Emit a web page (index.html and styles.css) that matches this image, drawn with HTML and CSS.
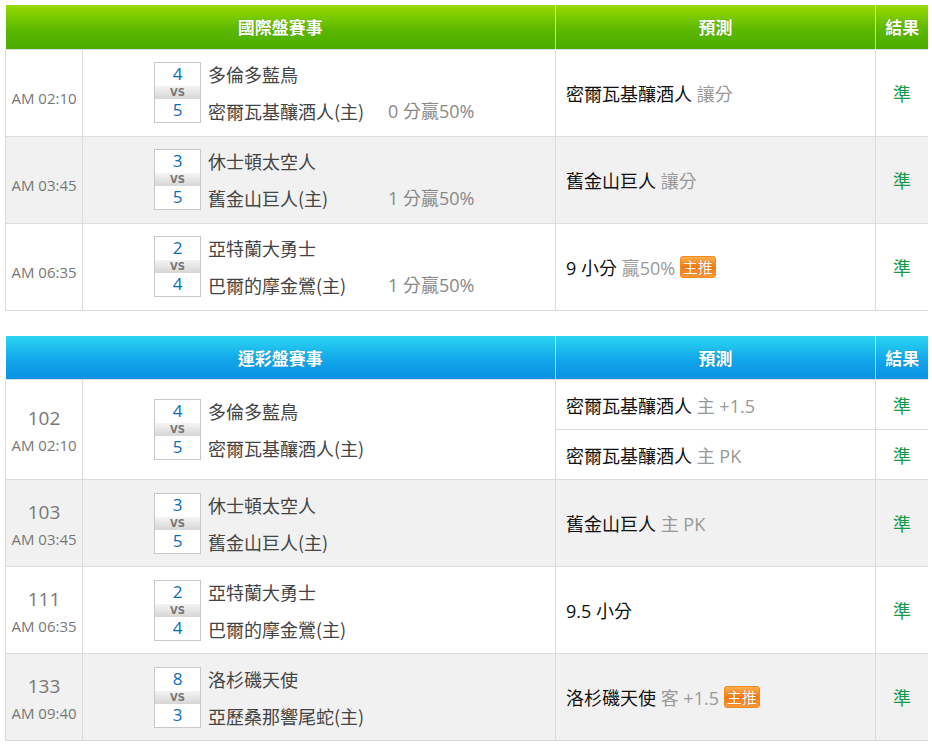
FILE: index.html
```html
<!DOCTYPE html>
<html lang="zh-Hant">
<head>
<meta charset="utf-8">
<link rel="stylesheet" href="styles.css">
</head>
<body>
<table class="board green">
  <colgroup><col class="c-time"><col class="c-match"><col class="c-pred"><col class="c-res"></colgroup>
  <thead>
    <tr><th colspan="2">國際盤賽事</th><th>預測</th><th>結果</th></tr>
  </thead>
  <tbody>
    <tr>
      <td class="time"><div class="clock low">AM 02:10</div></td>
      <td class="match">
        <div class="game">
          <div class="score s1">4</div><div class="vs">VS</div><div class="score s2">5</div>
          <div class="team t1">多倫多藍鳥</div><div class="team t2">密爾瓦基釀酒人(主)</div>
          <div class="hcp">0 分贏50%</div>
        </div>
      </td>
      <td class="pred">密爾瓦基釀酒人 <span class="sub">讓分</span></td>
      <td class="res">準</td>
    </tr>
    <tr class="alt">
      <td class="time"><div class="clock low">AM 03:45</div></td>
      <td class="match">
        <div class="game">
          <div class="score s1">3</div><div class="vs">VS</div><div class="score s2">5</div>
          <div class="team t1">休士頓太空人</div><div class="team t2">舊金山巨人(主)</div>
          <div class="hcp">1 分贏50%</div>
        </div>
      </td>
      <td class="pred">舊金山巨人 <span class="sub">讓分</span></td>
      <td class="res">準</td>
    </tr>
    <tr>
      <td class="time"><div class="clock low">AM 06:35</div></td>
      <td class="match">
        <div class="game">
          <div class="score s1">2</div><div class="vs">VS</div><div class="score s2">4</div>
          <div class="team t1">亞特蘭大勇士</div><div class="team t2">巴爾的摩金鶯(主)</div>
          <div class="hcp">1 分贏50%</div>
        </div>
      </td>
      <td class="pred">9 小分 <span class="sub">贏50%</span> <span class="badge">主推</span></td>
      <td class="res">準</td>
    </tr>
  </tbody>
</table>

<table class="board blue">
  <colgroup><col class="c-time"><col class="c-match"><col class="c-pred"><col class="c-res"></colgroup>
  <thead>
    <tr><th colspan="2">運彩盤賽事</th><th>預測</th><th>結果</th></tr>
  </thead>
  <tbody>
    <tr class="split">
      <td class="time" rowspan="2"><div class="num">102</div><div class="clock">AM 02:10</div></td>
      <td class="match" rowspan="2">
        <div class="game">
          <div class="score s1">4</div><div class="vs">VS</div><div class="score s2">5</div>
          <div class="team t1">多倫多藍鳥</div><div class="team t2">密爾瓦基釀酒人(主)</div>
        </div>
      </td>
      <td class="pred half top">密爾瓦基釀酒人 <span class="sub">主 +1.5</span></td>
      <td class="res half top">準</td>
    </tr>
    <tr class="split">
      <td class="pred half">密爾瓦基釀酒人 <span class="sub">主 PK</span></td>
      <td class="res half">準</td>
    </tr>
    <tr class="alt">
      <td class="time"><div class="num">103</div><div class="clock">AM 03:45</div></td>
      <td class="match">
        <div class="game">
          <div class="score s1">3</div><div class="vs">VS</div><div class="score s2">5</div>
          <div class="team t1">休士頓太空人</div><div class="team t2">舊金山巨人(主)</div>
        </div>
      </td>
      <td class="pred">舊金山巨人 <span class="sub">主 PK</span></td>
      <td class="res">準</td>
    </tr>
    <tr>
      <td class="time"><div class="num">111</div><div class="clock">AM 06:35</div></td>
      <td class="match">
        <div class="game">
          <div class="score s1">2</div><div class="vs">VS</div><div class="score s2">4</div>
          <div class="team t1">亞特蘭大勇士</div><div class="team t2">巴爾的摩金鶯(主)</div>
        </div>
      </td>
      <td class="pred">9.5 小分</td>
      <td class="res">準</td>
    </tr>
    <tr class="alt">
      <td class="time"><div class="num">133</div><div class="clock">AM 09:40</div></td>
      <td class="match">
        <div class="game">
          <div class="score s1">8</div><div class="vs">VS</div><div class="score s2">3</div>
          <div class="team t1">洛杉磯天使</div><div class="team t2">亞歷桑那響尾蛇(主)</div>
        </div>
      </td>
      <td class="pred">洛杉磯天使 <span class="sub">客 +1.5</span> <span class="badge">主推</span></td>
      <td class="res">準</td>
    </tr>
  </tbody>
</table>
</body>
</html>
```

FILE: styles.css
```css
* { box-sizing: border-box; }
body {
  margin: 5px 4px 0 5px;
  background: #fff;
  font-family: "Open Sans", "Noto Sans CJK TC", sans-serif;
  color: #222;
}
.board {
  width: 923px;
  border-collapse: collapse;
  table-layout: fixed;
  margin-bottom: 25px;
}
.c-time { width: 77px; }
.c-match { width: 473px; }
.c-pred { width: 320px; }
.c-res { width: 53px; }
.board th {
  height: 44px;
  padding: 0;
  color: #fff;
  font-size: 17px;
  font-weight: bold;
  font-family: "Noto Sans CJK TC", sans-serif;
  text-align: center;
  border-left: 1px solid rgba(255,255,255,0.6);
  text-shadow: 0 0 1px rgba(0,0,0,0.25);
}
.board th:first-child { border-left: none; }
.green th { background: linear-gradient(#97db00, #5cb800 55%, #4aad00); }
.blue th { background: linear-gradient(#2cd6f2, #11a6ea 55%, #0a92e2); }
.board td {
  border: 1px solid #dcdcdc;
  padding: 0;
  height: 87px;
  vertical-align: middle;
}
.board tr.alt td { background: #f1f1f1; }
.time { text-align: center; color: #777; }
.clock { font-size: 15px; line-height: 18px; }
.clock.low { padding-top: 11px; }
.num { font-size: 19px; line-height: 26px; margin-bottom: 5px; color: #777; }
.game {
  display: grid;
  grid-template-columns: 47px 173px auto;
  grid-template-rows: 24px 13px 24px;
  column-gap: 7px;
  margin-left: 71px;
  font-family: "Noto Sans CJK TC", sans-serif;
}
.score {
  grid-column: 1;
  border: 1px solid #c8c8c8;
  background: #fff;
  color: #0b6cb8;
  text-align: center;
  font-family: "Open Sans", sans-serif;
  font-size: 17px;
  line-height: 22px;
}
.s1 { grid-row: 1; border-bottom: none; }
.s2 { grid-row: 3; border-top: none; }
.vs {
  grid-column: 1; grid-row: 2;
  background: linear-gradient(#f4f4f4, #d6d6d6);
  border-left: 1px solid #c8c8c8;
  border-right: 1px solid #c8c8c8;
  color: #777;
  font: bold 10px/13px "DejaVu Sans", sans-serif;
  text-align: center;
}
.team {
  grid-column: 2;
  font-size: 18px;
  line-height: 24px;
  color: #444;
  white-space: nowrap;
}
.t1 { grid-row: 1; }
.t2 { grid-row: 3; }
.hcp {
  grid-column: 3; grid-row: 3;
  font-size: 18px; line-height: 24px;
  color: #888;
  font-family: "Open Sans", "Noto Sans CJK TC", sans-serif;
  white-space: nowrap;
}
.pred {
  padding-left: 10px !important;
  font-size: 18px;
  color: #111;
  font-family: "Open Sans", "Noto Sans CJK TC", sans-serif;
  white-space: nowrap;
}
.sub { color: #999; }
.res {
  text-align: center;
  color: #169a45;
  font-size: 18px;
  font-family: "Noto Sans CJK TC", sans-serif;
}
.board td.half { height: 50px; }
.badge {
  display: inline-block;
  vertical-align: 2px;
  height: 22px;
  padding: 0 2px;
  border: 1px solid #f08a20;
  border-radius: 3px;
  background: linear-gradient(#ffb04a, #f57812 50%, #fb9a3a);
  color: #fff;
  font-size: 15px;
  line-height: 20px;
  font-family: "Noto Sans CJK TC", sans-serif;
  text-shadow: 0 0 1px rgba(150,60,0,0.6);
}
```
